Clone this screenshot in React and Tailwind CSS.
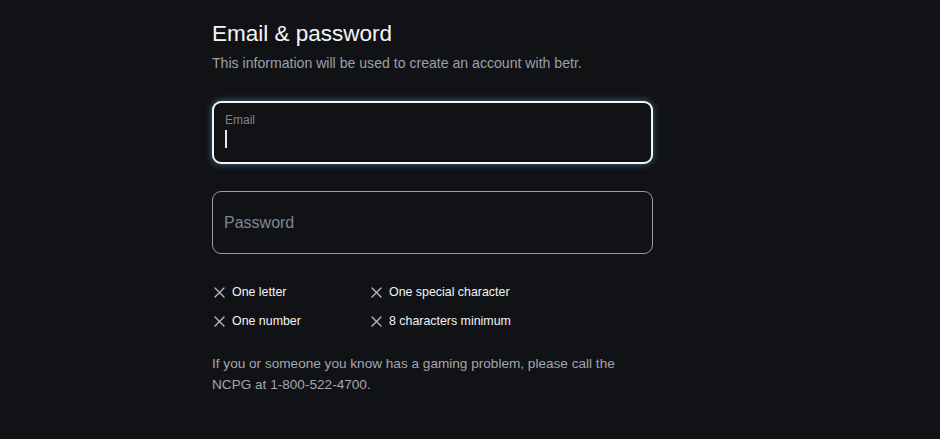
import React from "react";

function XIcon() {
  return (
    <svg width="11" height="11" viewBox="0 0 11 11" className="shrink-0">
      <path d="M1 1L10 10M10 1L1 10" stroke="#b8bcc4" strokeWidth="1.3" strokeLinecap="round" />
    </svg>
  );
}

function Req({ children }) {
  return (
    <div className="flex items-center gap-[7px] h-[18px]">
      <XIcon />
      <span className="text-[12.4px] text-[#f3f4f6]">{children}</span>
    </div>
  );
}

export default function App() {
  return (
    <div
      className="w-[940px] h-[439px] bg-[#111215] overflow-hidden"
      style={{ fontFamily: '"Liberation Sans", Arial, sans-serif' }}
    >
      <div className="ml-[212px] w-[441px] pt-[20px]">
        <h1 className="text-[22.5px] leading-[28px] text-[#f5f5f5] font-normal">Email &amp; password</h1>
        <p className="mt-[6px] text-[14.1px] leading-[18px] text-[#9ca0aa]">
          This information will be used to create an account with betr.
        </p>

        <div className="mt-[29px] h-[63px] rounded-[9px] border-2 border-[#f4f6f8] shadow-[0_0_6px_1px_rgba(90,170,220,0.45)] px-[11px] pt-[10px] bg-[#111215]">
          <div className="text-[12px] leading-[14px] text-[#808590]">Email</div>
          <div className="mt-[3px] w-[1.5px] h-[18px] bg-[#e5e7eb]" />
        </div>

        <div className="mt-[27px] h-[63px] rounded-[9px] border border-[#9a9ca2] px-[11px] flex items-center">
          <span className="text-[16px] text-[#7e8794]">Password</span>
        </div>

        <div className="mt-[29px] grid grid-cols-[157px_1fr] gap-y-[11px] pl-[2px]">
          <Req>One letter</Req>
          <Req>One special character</Req>
          <Req>One number</Req>
          <Req>8 characters minimum</Req>
        </div>

        <p className="mt-[23px] text-[13.6px] leading-[21px] text-[#a3a6ae]">
          If you or someone you know has a gaming problem, please call the
          <br />
          NCPG at 1-800-522-4700.
        </p>
      </div>
    </div>
  );
}
